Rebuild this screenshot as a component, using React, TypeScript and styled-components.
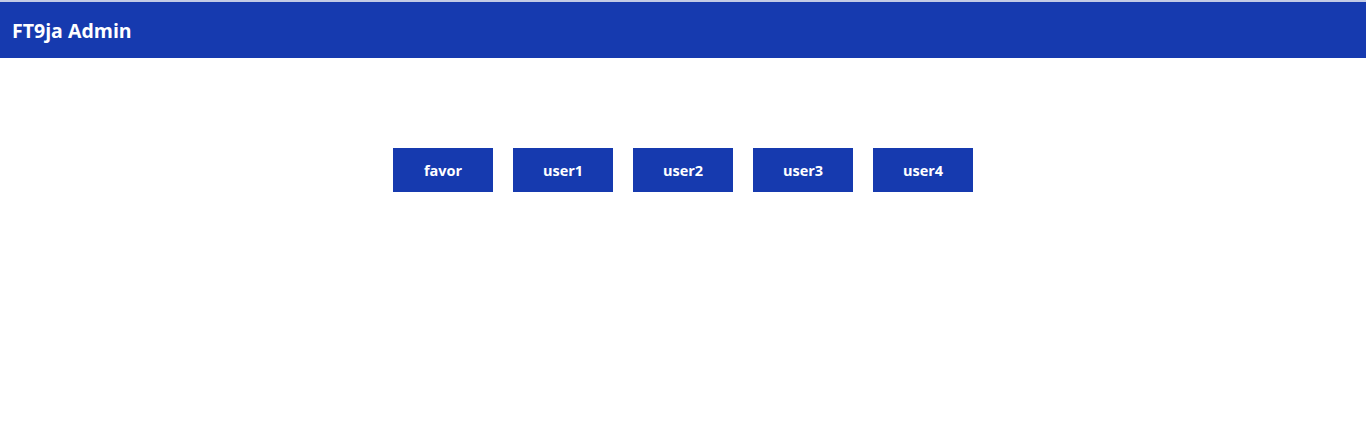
import React from "react";
import styled, { createGlobalStyle } from "styled-components";

const GlobalStyle = createGlobalStyle`
  html, body {
    margin: 0;
    padding: 0;
    background: #ffffff;
    font-family: "Open Sans", "Noto Sans", "Liberation Sans", sans-serif;
  }
`;

const Header = styled.header`
  height: 56px;
  border-top: 2px solid #c3cbe6;
  background: #163aaf;
  display: flex;
  align-items: center;
  padding: 0 12px;
`;

const Title = styled.h1`
  margin: 0;
  color: #ffffff;
  font-size: 19.5px;
  font-weight: 700;
  letter-spacing: 0;
`;

const Main = styled.main`
  display: flex;
  justify-content: center;
  gap: 20px;
  padding-top: 90px;
`;

const UserButton = styled.button`
  width: 100px;
  height: 44px;
  border: none;
  border-radius: 0;
  background: #163aaf;
  color: #ffffff;
  font-family: inherit;
  font-size: 14.5px;
  font-weight: 700;
  cursor: pointer;
  padding: 0;
`;

const users = ["favor", "user1", "user2", "user3", "user4"];

export default function App() {
  return (
    <>
      <GlobalStyle />
      <Header>
        <Title>FT9ja Admin</Title>
      </Header>
      <Main>
        {users.map((u) => (
          <UserButton key={u}>{u}</UserButton>
        ))}
      </Main>
    </>
  );
}
